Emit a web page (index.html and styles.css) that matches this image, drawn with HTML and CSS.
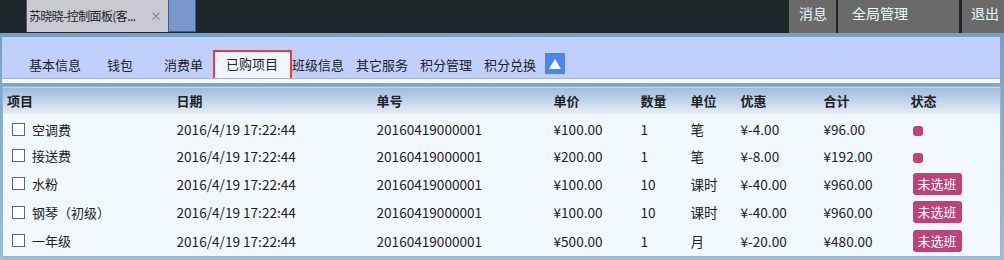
FILE: index.html
```html
<!DOCTYPE html>
<html lang="zh-CN">
<head>
    <meta charset="UTF-8">
    <title>已购项目</title>
    <link rel="stylesheet" href="styles.css">
</head>
<body>
    <div class="topbar">
        <div class="tab">
            <span class="tab-title">苏晓晓-控制面板(客...</span>
            <span class="tab-close">×</span>
            <span class="tab-new"></span>
        </div>
        <div class="top-links">
            <a class="top-link msg">消息</a>
            <a class="top-link admin">全局管理</a>
            <a class="top-link quit">退出</a>
        </div>
    </div>

    <div class="main">
        <div class="nav">
            <a class="nav-item">基本信息</a>
            <a class="nav-item">钱包</a>
            <a class="nav-item">消费单</a>
            <a class="nav-item active">已购项目</a>
            <a class="nav-item tight">班级信息</a>
            <a class="nav-item tight">其它服务</a>
            <a class="nav-item tight">积分管理</a>
            <a class="nav-item last">积分兑换</a>
            <span class="nav-up"><svg width="12" height="10" viewBox="0 0 12 10"><polygon points="6,0 12,10 0,10" fill="#fff"/></svg></span>
        </div>

        <table class="grid">
            <colgroup>
                <col style="width:174px"><col style="width:200px"><col style="width:177px">
                <col style="width:87px"><col style="width:50px"><col style="width:50px">
                <col style="width:83px"><col style="width:87px"><col>
            </colgroup>
            <thead>
                <tr><th>项目</th><th>日期</th><th>单号</th><th>单价</th><th>数量</th><th>单位</th><th>优惠</th><th>合计</th><th>状态</th></tr>
            </thead>
            <tbody>
                <tr class="r1"><td><span class="cb"></span>空调费</td><td>2016/4/19 17:22:44</td><td>20160419000001</td><td>¥100.00</td><td>1</td><td>笔</td><td>¥-4.00</td><td>¥96.00</td><td><span class="dot"></span></td></tr>
                <tr class="r2"><td><span class="cb"></span>接送费</td><td>2016/4/19 17:22:44</td><td>20160419000001</td><td>¥200.00</td><td>1</td><td>笔</td><td>¥-8.00</td><td>¥192.00</td><td><span class="dot"></span></td></tr>
                <tr class="r3"><td><span class="cb"></span>水粉</td><td>2016/4/19 17:22:44</td><td>20160419000001</td><td>¥100.00</td><td>10</td><td>课时</td><td>¥-40.00</td><td>¥960.00</td><td><span class="badge">未选班</span></td></tr>
                <tr class="r4"><td><span class="cb"></span>钢琴（初级）</td><td>2016/4/19 17:22:44</td><td>20160419000001</td><td>¥100.00</td><td>10</td><td>课时</td><td>¥-40.00</td><td>¥960.00</td><td><span class="badge">未选班</span></td></tr>
                <tr class="r5"><td><span class="cb"></span>一年级</td><td>2016/4/19 17:22:44</td><td>20160419000001</td><td>¥500.00</td><td>1</td><td>月</td><td>¥-20.00</td><td>¥480.00</td><td><span class="badge">未选班</span></td></tr>
            </tbody>
        </table>
    </div>
</body>
</html>
```

FILE: styles.css
```css
body {
    margin: 0;
    padding: 0;
    width: 1004px;
    height: 260px;
    overflow: hidden;
    font-family: "Noto Sans CJK SC", "Noto Sans", sans-serif;
    font-size: 13px;
    color: #222;
    background: linear-gradient(#6f9dbe, #9dbfd6);
}

/* top bar */
.topbar {
    height: 33px;
    background-color: #1e2629;
    display: flex;
    justify-content: space-between;
}

.tab {
    margin-left: 26px;
    height: 32px;
    display: flex;
    align-items: stretch;
}

.tab-title {
    background-color: #c8c9d1;
    color: #222;
    padding-left: 2px;
    line-height: 32px;
    font-size: 12px;
    letter-spacing: -0.6px;
    width: 121px;
    white-space: nowrap;
    border-left: 1px solid #4a5a78;
}

.tab-close {
    background-color: #c8c9d1;
    color: #777;
    line-height: 32px;
    font-size: 12px;
    width: 18px;
}

.tab-new {
    width: 26px;
    background-color: #7a98cc;
    border: 1px solid #4a5a90;
    border-top: none;
}

.top-links {
    display: flex;
}

.top-link {
    background-color: #6a6a6a;
    color: #eafcfc;
    font-size: 14px;
    line-height: 27px;
    height: 33px;
    box-sizing: border-box;
}

.msg {
    width: 47px;
    padding-left: 10px;
    margin-right: 2px;
}

.admin {
    width: 121px;
    padding-left: 14px;
    margin-right: 3px;
}

.quit {
    width: 42px;
    padding-left: 9px;
}

/* nav */
.main {
    padding: 4px 4px 0 2px;
}

.nav {
    height: 41px;
    background-color: #c0d0fc;
    border-bottom: 1px solid #b4a8f8;
    box-shadow: 0 4px 0 #f4f8ff;
    display: flex;
    align-items: flex-end;
    padding-left: 27px;
}

.nav-item {
    font-size: 13px;
    color: #222;
    height: 25px;
    line-height: 24px;
    white-space: nowrap;
    margin-right: 26px;
}

.nav-item:nth-child(2) {
    margin-right: 31px;
}

.nav-item:nth-child(3) {
    margin-right: 10px;
}

.nav-item.active {
    border: 2px solid #f03838;
    border-bottom: none;
    background-color: #f0f6ff;
    padding: 0 12px 0 11px;
    margin-right: 0;
    height: 26px;
}

.nav-item.tight {
    margin-right: 12px;
}

.nav-item.last {
    margin-right: 9px;
}

.nav-up {
    width: 20px;
    height: 21px;
    background-color: #4a86ee;
    display: flex;
    align-items: center;
    justify-content: center;
    margin-bottom: 4px;
}

/* table */
.grid {
    margin-top: 7px;
    width: 999px;
    border-collapse: collapse;
    table-layout: fixed;
    background-color: #f2f9fe;
    border: 1px solid #8fb8d0;
}

.grid th {
    height: 27px;
    text-align: left;
    font-weight: bold;
    font-size: 13px;
    padding: 0;
    background: linear-gradient(#9dbcda, #e6eef6);
}

.grid th:first-child {
    padding-left: 4px;
}

.grid td {
    padding: 4px 0 0 0;
    white-space: nowrap;
    font-size: 13.6px;
}

.grid td:first-child {
    padding-left: 9px;
    font-size: 13px;
}

.r1 td { height: 22px; }
.r2 td { height: 23px; }
.r3 td { height: 25px; }
.r4 td { height: 24px; }
.r5 td { height: 25px; padding-bottom: 3px; }

.cb {
    display: inline-block;
    width: 11px;
    height: 11px;
    border: 1px solid #666;
    background-color: #fff;
    vertical-align: -1px;
    margin-right: 7px;
}

.dot {
    display: inline-block;
    width: 10px;
    height: 10px;
    border-radius: 3px;
    background-color: #c0407a;
    margin-left: 2px;
    vertical-align: middle;
}

.badge {
    display: inline-block;
    background-color: #c0407a;
    color: #fff;
    font-size: 13px;
    height: 22px;
    line-height: 22px;
    padding: 0 5px;
    border-radius: 3px;
    margin-left: 2px;
}
```
